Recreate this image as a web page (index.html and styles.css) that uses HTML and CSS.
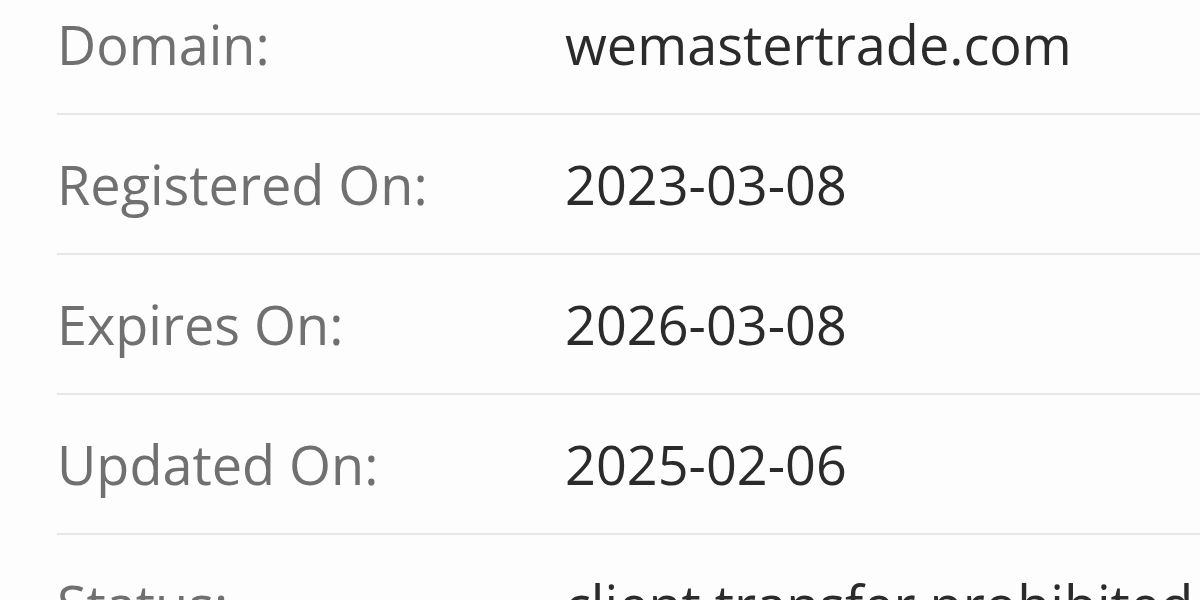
FILE: index.html
```html
<!DOCTYPE html>
<html lang="en">
<head>
<meta charset="utf-8">
<title>Whois</title>
<link rel="stylesheet" href="styles.css">
</head>
<body>
<div class="whois">
  <div class="row"><div class="label">Domain:</div><div class="value">wemastertrade.com</div></div>
  <div class="row"><div class="label">Registered On:</div><div class="value">2023-03-08</div></div>
  <div class="row"><div class="label">Expires On:</div><div class="value">2026-03-08</div></div>
  <div class="row"><div class="label">Updated On:</div><div class="value">2025-02-06</div></div>
  <div class="row"><div class="label">Status:</div><div class="value">client transfer prohibited</div></div>
</div>
</body>
</html>
```
FILE: styles.css
```css
html, body {
  margin: 0;
  padding: 0;
  background: #fdfdfd;
  overflow: hidden;
}
.whois {
  margin-top: -25px;
  padding-left: 57px;
  font-family: "Open Sans", "Liberation Sans", sans-serif;
  font-size: 54px;
}
.row {
  display: grid;
  grid-template-columns: 508px 1fr;
  align-items: center;
  height: 138px;
  border-bottom: 2px solid #e7e7e7;
  white-space: nowrap;
}
.label {
  color: #707070;
  line-height: 74px;
}
.value {
  color: #2b2b2b;
  line-height: 74px;
}
```
